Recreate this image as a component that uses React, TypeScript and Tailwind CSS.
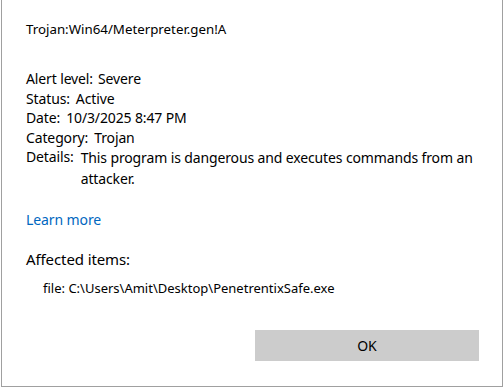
export default function App() {
  const font = { fontFamily: '"Noto Sans", "Segoe UI", sans-serif' };
  return (
    <div className="w-[504px] h-[389px] bg-white" style={font}>
      <div className="ml-[1px] w-[502px] h-[387px] border-l border-r border-b border-[#a0a0a0] flex flex-col pl-[24px] text-black">
        <div className="mt-[20px] text-[13.3px] leading-[18px]">Trojan:Win64/Meterpreter.gen!A</div>
        <div className="mt-[31px] text-[14px] leading-[19.6px] tracking-[-0.13px] flex flex-col">
          <div className="flex gap-[5px]"><span>Alert level:</span><span>Severe</span></div>
          <div className="flex gap-[6px]"><span>Status:</span><span>Active</span></div>
          <div className="flex gap-[6px]"><span>Date:</span><span>10/3/2025 8:47 PM</span></div>
          <div className="flex gap-[6px]"><span>Category:</span><span>Trojan</span></div>
          <div className="flex gap-[7px]">
            <span className="shrink-0">Details:</span>
            <span className="w-[400px] leading-[21px]">This program is dangerous and executes commands from an attacker.</span>
          </div>
        </div>
        <div className="mt-[21px] text-[14px] leading-[20px] tracking-[-0.1px] text-[#0067c0]">Learn more</div>
        <div className="mt-[19px] text-[15px] leading-[21px] tracking-[-0.1px]">Affected items:</div>
        <div className="mt-[9px] ml-[17px] text-[13px] leading-[18px]">file: C:\Users\Amit\Desktop\PenetrentixSafe.exe</div>
        <div className="mt-[33px] flex justify-end pr-[23px]">
          <button className="w-[224px] h-[31px] bg-[#cccccc] text-[14px] text-black">OK</button>
        </div>
      </div>
    </div>
  );
}
